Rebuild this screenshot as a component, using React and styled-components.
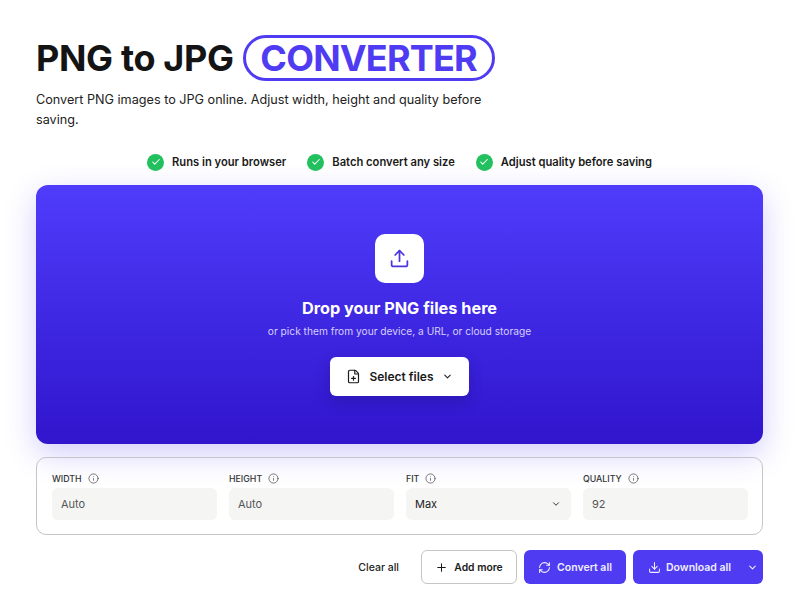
import React from 'react';
import styled, { createGlobalStyle } from 'styled-components';
import { Upload, FilePlus, ChevronDown, Info, Plus, RefreshCw, Download, Check } from 'lucide-react';

const GlobalStyle = createGlobalStyle`
  html, body {
    margin: 0;
    padding: 0;
    background: #fff;
    font-family: Inter, "Liberation Sans", sans-serif;
    color: #151515;
  }
  * { box-sizing: border-box; }
`;

const Page = styled.div`
  width: 799px;
  height: 615px;
  overflow: hidden;
  padding: 35px 36px 0;
`;

const TitleRow = styled.div`
  display: flex;
  align-items: center;
  gap: 9px;
  height: 46px;
`;

const Title = styled.h1`
  margin: 0 0 1px;
  font-size: 36px;
  font-weight: 700;
  letter-spacing: -0.35px;
  color: #141414;
`;

const TitleBadge = styled.span`
  display: flex;
  align-items: center;
  justify-content: center;
  width: 252px;
  height: 46px;
  border: 3px solid #4f3cf2;
  border-radius: 23px;
  font-size: 36px;
  font-weight: 700;
  letter-spacing: -0.8px;
  color: #4f3cf2;
`;

const Subtitle = styled.p`
  margin: 9px 0 0;
  width: 460px;
  font-size: 12.65px;
  line-height: 19.5px;
  color: #222;
`;

const Perks = styled.div`
  display: flex;
  justify-content: center;
  gap: 21px;
  margin-top: 24px;
  height: 18px;
`;

const Perk = styled.div`
  display: flex;
  align-items: center;
  gap: 8px;
  font-size: 11.2px;
  font-weight: 600;
  color: #1a1a1a;
`;

const PerkDot = styled.span`
  display: flex;
  align-items: center;
  justify-content: center;
  width: 17px;
  height: 17px;
  border-radius: 50%;
  background: #22c05f;
  color: #fff;
`;

const DropZone = styled.div`
  display: flex;
  flex-direction: column;
  align-items: center;
  margin-top: 14px;
  height: 259px;
  padding-top: 49px;
  border-radius: 12px;
  background: linear-gradient(180deg, #4f3cfb 0%, #3015cc 100%);
  box-shadow: 0 10px 30px rgba(79, 60, 242, 0.25);
`;

const UploadTile = styled.div`
  display: flex;
  align-items: center;
  justify-content: center;
  width: 49px;
  height: 49px;
  border-radius: 10px;
  background: #fff;
  color: #4a35e0;
`;

const DropTitle = styled.div`
  margin-top: 15px;
  font-size: 16.3px;
  line-height: 20px;
  font-weight: 700;
  color: #fff;
`;

const DropHint = styled.div`
  margin-top: 6px;
  font-size: 10.2px;
  line-height: 14px;
  color: #d5d0fb;
`;

const SelectButton = styled.div`
  display: flex;
  align-items: center;
  justify-content: center;
  gap: 8px;
  margin-top: 19px;
  width: 139px;
  height: 39px;
  border-radius: 6px;
  background: #fff;
  font-size: 12px;
  font-weight: 600;
  color: #1a1a1a;
  box-shadow: 0 6px 14px rgba(20, 10, 90, 0.25);
`;

const Settings = styled.div`
  display: grid;
  grid-template-columns: repeat(4, 165px);
  gap: 12px;
  margin-top: 13px;
  height: 78px;
  padding: 13px 15px 0;
  border: 1px solid #c5c5c8;
  border-radius: 10px;
`;

const Field = styled.div`
  display: flex;
  flex-direction: column;
`;

const Label = styled.div`
  display: flex;
  align-items: center;
  gap: 6px;
  height: 14px;
  font-size: 8.8px;
  font-weight: 500;
  color: #333;
  svg { color: #444; }
`;

const InputBox = styled.div`
  display: flex;
  align-items: center;
  justify-content: space-between;
  margin-top: 3px;
  height: 32px;
  padding: 0 10px 0 9px;
  border-radius: 6px;
  background: #f5f5f4;
  font-size: 11px;
  color: ${props => (props.$filled ? '#222' : '#555')};
`;

const Actions = styled.div`
  display: flex;
  justify-content: flex-end;
  align-items: center;
  gap: 7px;
  margin-top: 15px;
`;

const ClearButton = styled.div`
  margin-right: 15px;
  font-size: 10.5px;
  font-weight: 500;
  color: #222;
`;

const Button = styled.div`
  display: flex;
  align-items: center;
  justify-content: center;
  gap: 6px;
  width: ${props => props.$width}px;
  height: 34px;
  border-radius: 6px;
  font-size: ${props => (props.$outline ? '10.3px' : '10.5px')};
  font-weight: 600;
  background: ${props => (props.$outline ? '#fff' : '#4f3cf2')};
  color: ${props => (props.$outline ? '#1a1a1a' : '#f0eeff')};
  border: ${props => (props.$outline ? '1px solid #c5c5c8' : 'none')};
`;

const SplitButton = styled(Button)`
  justify-content: flex-start;
  gap: 5px;
  padding-left: 15px;
`;

const SplitCaret = styled.span`
  display: flex;
  margin-left: auto;
  margin-right: 5px;
`;

const perks = ['Runs in your browser', 'Batch convert any size', 'Adjust quality before saving'];

const fields = [
  { label: 'WIDTH', value: 'Auto' },
  { label: 'HEIGHT', value: 'Auto' },
  { label: 'FIT', value: 'Max', select: true },
  { label: 'QUALITY', value: '92' }
];

export default function App() {
  return (
    <Page>
      <GlobalStyle />
      <TitleRow>
        <Title>PNG to JPG</Title>
        <TitleBadge>CONVERTER</TitleBadge>
      </TitleRow>
      <Subtitle>Convert PNG images to JPG online. Adjust width, height and quality before saving.</Subtitle>
      <Perks>
        {perks.map(text => (
          <Perk key={text}>
            <PerkDot>
              <Check size={10} strokeWidth={2.5} />
            </PerkDot>
            {text}
          </Perk>
        ))}
      </Perks>
      <DropZone>
        <UploadTile>
          <Upload size={21} strokeWidth={2} />
        </UploadTile>
        <DropTitle>Drop your PNG files here</DropTitle>
        <DropHint>or pick them from your device, a URL, or cloud storage</DropHint>
        <SelectButton>
          <FilePlus size={15} strokeWidth={1.9} />
          Select files
          <ChevronDown size={11} strokeWidth={2.2} />
        </SelectButton>
      </DropZone>
      <Settings>
        {fields.map(field => (
          <Field key={field.label}>
            <Label>
              {field.label}
              <Info size={11} strokeWidth={1.5} />
            </Label>
            <InputBox $filled={field.select}>
              {field.value}
              {field.select && <ChevronDown size={10} strokeWidth={2.2} />}
            </InputBox>
          </Field>
        ))}
      </Settings>
      <Actions>
        <ClearButton>Clear all</ClearButton>
        <Button $outline $width={96}>
          <Plus size={13} strokeWidth={1.9} />
          Add more
        </Button>
        <Button $width={102}>
          <RefreshCw size={13} strokeWidth={1.9} />
          Convert all
        </Button>
        <SplitButton $width={130}>
          <Download size={13} strokeWidth={1.9} />
          Download all
          <SplitCaret>
            <ChevronDown size={11} strokeWidth={2.4} />
          </SplitCaret>
        </SplitButton>
      </Actions>
    </Page>
  );
}
